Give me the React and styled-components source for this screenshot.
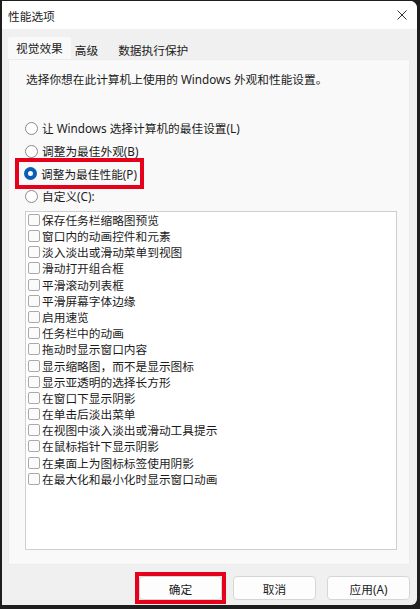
import React from 'react'
import styled, { createGlobalStyle } from 'styled-components'

const Global = createGlobalStyle`
html, body {
  margin: 0;
  padding: 0;
  background: #1e1e1e;
}
body {
  font-family: "Noto Sans", "Noto Sans CJK SC", sans-serif;
  font-size: 11.7px;
  color: #1b1b1b;
}
`

const Window = styled.div`
margin: 1px 3px 4px 2px;
width: 415px;
height: 604px;
background: #f0f0f0;
border-radius: 0 7px 6px 0;
overflow: hidden;
display: flex;
flex-direction: column;
`

const TitleBar = styled.div`
height: 28px;
flex: none;
background: #ffffff;
display: flex;
align-items: center;
justify-content: space-between;
padding: 0 10px 0 6px;
font-size: 11.7px;
`

const Body = styled.div`
flex: 1;
display: flex;
flex-direction: column;
padding: 8px 7px 0 6px;
`

const Tabs = styled.div`
display: flex;
height: 22px;
align-items: stretch;
`

const Tab = styled.div`
display: flex;
align-items: center;
background: ${p => (p.active ? '#f9f9f9' : 'transparent')};
padding: ${p => (p.active ? '0 8px 1px 8px' : '2px 0 0 4px')};
margin-right: ${p => (p.active ? '0' : '16px')};
border-radius: 3px 3px 0 0;
`

const Panel = styled.div`
height: 506px;
background: #f9f9f9;
border: 1px solid #ececec;
box-sizing: border-box;
display: flex;
flex-direction: column;
padding: 10px 12px 14px 16px;
`

const Desc = styled.div`
height: 18px;
line-height: 18px;
margin-left: 1px;
`

const Radios = styled.div`
margin-top: 29px;
display: flex;
flex-direction: column;
align-items: flex-start;
`

const RadioRow = styled.div`
height: 22.7px;
line-height: 16px;
display: flex;
align-items: center;
gap: 4px;
white-space: nowrap;
`

const Highlight = styled.div`
margin: -4px 0 -4px -10px;
border: 4px solid #e6001b;
padding-right: 3px;
${RadioRow} {
  padding-left: 5px;
}
`

const Radio = styled.span`
width: 13px;
height: 13px;
box-sizing: border-box;
border-radius: 50%;
border: ${p => (p.checked ? '4px solid #0a5fb4' : '1px solid #8a8a8a')};
background: #ffffff;
flex: none;
`

const List = styled.div`
margin-top: 3px;
flex: 1;
background: #ffffff;
border: 1px solid #cfcfcf;
padding: 0 2px;
`

const CheckRow = styled.div`
height: 16.2px;
line-height: 16px;
display: flex;
align-items: center;
gap: 2px;
white-space: nowrap;
`

const Check = styled.span`
width: 12px;
height: 12px;
box-sizing: border-box;
border: 1px solid #a9a9a9;
border-radius: 2px;
background: #fbfbfb;
flex: none;
`

const Buttons = styled.div`
display: flex;
justify-content: flex-end;
align-items: center;
gap: 11px;
padding-top: 11px;
`

const ButtonMark = styled.div`
margin: -4px;
border: 4px solid #e6001b;
display: flex;
`

const Button = styled.div`
width: 83px;
height: 24px;
box-sizing: border-box;
background: #fdfdfd;
border: 1px solid #d6d6d6;
border-radius: 4px;
display: flex;
align-items: center;
justify-content: center;
`

const options = [
  '保存任务栏缩略图预览',
  '窗口内的动画控件和元素',
  '淡入淡出或滑动菜单到视图',
  '滑动打开组合框',
  '平滑滚动列表框',
  '平滑屏幕字体边缘',
  '启用速览',
  '任务栏中的动画',
  '拖动时显示窗口内容',
  '显示缩略图，而不是显示图标',
  '显示亚透明的选择长方形',
  '在窗口下显示阴影',
  '在单击后淡出菜单',
  '在视图中淡入淡出或滑动工具提示',
  '在鼠标指针下显示阴影',
  '在桌面上为图标标签使用阴影',
  '在最大化和最小化时显示窗口动画',
]

const Close = () => (
  <svg width="10" height="10" viewBox="0 0 10 10">
    <path d="M0.5 0.5 L9.5 9.5 M9.5 0.5 L0.5 9.5" stroke="#333" strokeWidth="1" fill="none" />
  </svg>
)

export default function App() {
  return (
    <>
      <Global />
      <Window>
        <TitleBar>
          <span>性能选项</span>
          <Close />
        </TitleBar>
        <Body>
          <Tabs>
            <Tab active>视觉效果</Tab>
            <Tab>高级</Tab>
            <Tab>数据执行保护</Tab>
          </Tabs>
          <Panel>
            <Desc>选择你想在此计算机上使用的 Windows 外观和性能设置。</Desc>
            <Radios>
              <RadioRow><Radio />让 Windows 选择计算机的最佳设置(L)</RadioRow>
              <RadioRow><Radio />调整为最佳外观(B)</RadioRow>
              <Highlight>
                <RadioRow><Radio checked />调整为最佳性能(P)</RadioRow>
              </Highlight>
              <RadioRow><Radio />自定义(C):</RadioRow>
            </Radios>
            <List>
              {options.map(o => (
                <CheckRow key={o}><Check />{o}</CheckRow>
              ))}
            </List>
          </Panel>
          <Buttons>
            <ButtonMark><Button>确定</Button></ButtonMark>
            <Button>取消</Button>
            <Button>应用(A)</Button>
          </Buttons>
        </Body>
      </Window>
    </>
  )
}
